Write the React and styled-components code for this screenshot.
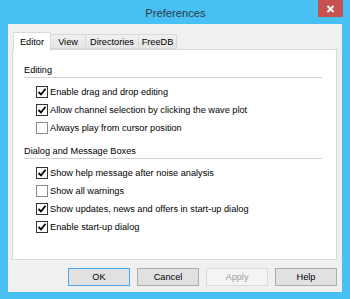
import React from "react";
import styled, { createGlobalStyle } from "styled-components";

const Global = createGlobalStyle`
  html, body { margin: 0; padding: 0; }
  body {
    width: 350px; height: 299px; overflow: hidden;
    font-family: "Liberation Sans", Arial, sans-serif;
  }
`;

const Frame = styled.div`
  width: 350px;
  height: 299px;
  box-sizing: border-box;
  background: #48c0f4;
  display: flex;
  flex-direction: column;
  padding: 0 8px 7px 8px;
`;

const TitleBar = styled.div`
  height: 24px;
  display: grid;
  grid-template-columns: 1fr auto 1fr;
  align-items: start;
  margin: 0 -1px 0 0;
`;

const Title = styled.div`
  grid-column: 2;
  font-size: 11.2px;
  color: #2b3a42;
  line-height: 14px;
  padding-top: 6px;
`;

const CloseBtn = styled.div`
  grid-column: 3;
  justify-self: end;
  width: 25px;
  height: 17px;
  margin-top: 0;
  background: #c75050;
  display: flex;
  align-items: center;
  justify-content: center;
`;

const Client = styled.div`
  flex: 1;
  background: #f0f0f0;
  display: flex;
  flex-direction: column;
  padding: 8px 5px 0 4px;
  font-size: 9.2px;
  color: #000;
`;

const TabStrip = styled.div`
  display: flex;
  align-items: flex-end;
  height: 17px;
  padding-left: 1px;
  position: relative;
  z-index: 1;
`;

const Tab = styled.div`
  box-sizing: border-box;
  height: ${(p) => (p.$active ? 18 : 15)}px;
  width: ${(p) => p.$w}px;
  margin-bottom: ${(p) => (p.$active ? -1 : 0)}px;
  background: ${(p) => (p.$active ? "#fff" : "linear-gradient(#f0f0f0, #e5e5e5)")};
  border: 1px solid #d9d9d9;
  border-bottom: ${(p) => (p.$active ? "none" : "1px solid #d9d9d9")};
  border-left: ${(p) => (p.$first || p.$active ? "1px solid #d9d9d9" : "none")};
  border-right: ${(p) => (p.$beforeActive ? "none" : "1px solid #d9d9d9")};
  display: flex;
  align-items: center;
  justify-content: center;
  padding-top: ${(p) => (p.$active ? 0 : 1)}px;
  line-height: 12px;
  color: #000;
`;

const Panel = styled.div`
  box-sizing: border-box;
  height: 211px;
  background: #fff;
  border: 1px solid #d9d9d9;
  padding: 13px 14px 0 11px;
  display: flex;
  flex-direction: column;
`;

const SectionLabel = styled.div`
  height: 14px;
  line-height: 14px;
  color: #000;
`;

const Rule = styled.div`
  height: 0;
  border-top: 1px solid #d0d0d0;
  margin-bottom: 5px;
`;

const Row = styled.div`
  height: 18px;
  display: flex;
  align-items: center;
  padding-left: 12px;
  gap: 2px;
  white-space: nowrap;
`;

const Box = styled.span`
  box-sizing: border-box;
  width: 12px;
  height: 12px;
  border: 1px solid ${(p) => (p.$checked ? "#333" : "#8a8a8a")};
  background: #fff;
  display: inline-flex;
  align-items: center;
  justify-content: center;
  flex: none;
`;

const Spacer = styled.div`
  height: ${(p) => p.$h}px;
`;

const ButtonBar = styled.div`
  display: flex;
  justify-content: flex-end;
  gap: 7px;
  margin-top: 8px;
`;

const Button = styled.div`
  box-sizing: border-box;
  width: 62px;
  height: 18px;
  display: flex;
  align-items: center;
  justify-content: center;
  background: ${(p) => (p.$disabled ? "#f4f4f4" : "#e1e1e1")};
  border: 1px solid ${(p) => (p.$default ? "#4fa8ea" : p.$disabled ? "#d9d9d9" : "#adadad")};
  color: ${(p) => (p.$disabled ? "#a0a0a0" : "#000")};
`;

function Check({ checked, children }) {
  return (
    <Row>
      <Box $checked={checked}>
        {checked && (
          <svg width="10" height="10" viewBox="0 0 10 10">
            <path d="M1.5 5 L4 7.5 L8.5 1.8" fill="none" stroke="#000" strokeWidth="1.8" />
          </svg>
        )}
      </Box>
      <span>{children}</span>
    </Row>
  );
}

export default function App() {
  return (
    <>
      <Global />
      <Frame>
        <TitleBar>
          <Title>Preferences</Title>
          <CloseBtn>
            <svg width="9" height="8" viewBox="0 0 9 8">
              <path d="M1.5 1 L7.5 7 M7.5 1 L1.5 7" stroke="#fff" strokeWidth="1.8" />
            </svg>
          </CloseBtn>
        </TitleBar>
        <Client>
          <TabStrip>
            <Tab $active $w={38}>Editor</Tab>
            <Tab $w={35}>View</Tab>
            <Tab $w={53}>Directories</Tab>
            <Tab $w={38}>FreeDB</Tab>
          </TabStrip>
          <Panel>
            <SectionLabel>Editing</SectionLabel>
            <Rule />
            <Check checked>Enable drag and drop editing</Check>
            <Check checked>Allow channel selection by clicking the wave plot</Check>
            <Check>Always play from cursor position</Check>
            <Spacer $h={7} />
            <SectionLabel>Dialog and Message Boxes</SectionLabel>
            <Rule />
            <Check checked>Show help message after noise analysis</Check>
            <Check>Show all warnings</Check>
            <Check checked>Show updates, news and offers in start-up dialog</Check>
            <Check checked>Enable start-up dialog</Check>
          </Panel>
          <ButtonBar>
            <Button $default>OK</Button>
            <Button>Cancel</Button>
            <Button $disabled>Apply</Button>
            <Button>Help</Button>
          </ButtonBar>
        </Client>
      </Frame>
    </>
  );
}
